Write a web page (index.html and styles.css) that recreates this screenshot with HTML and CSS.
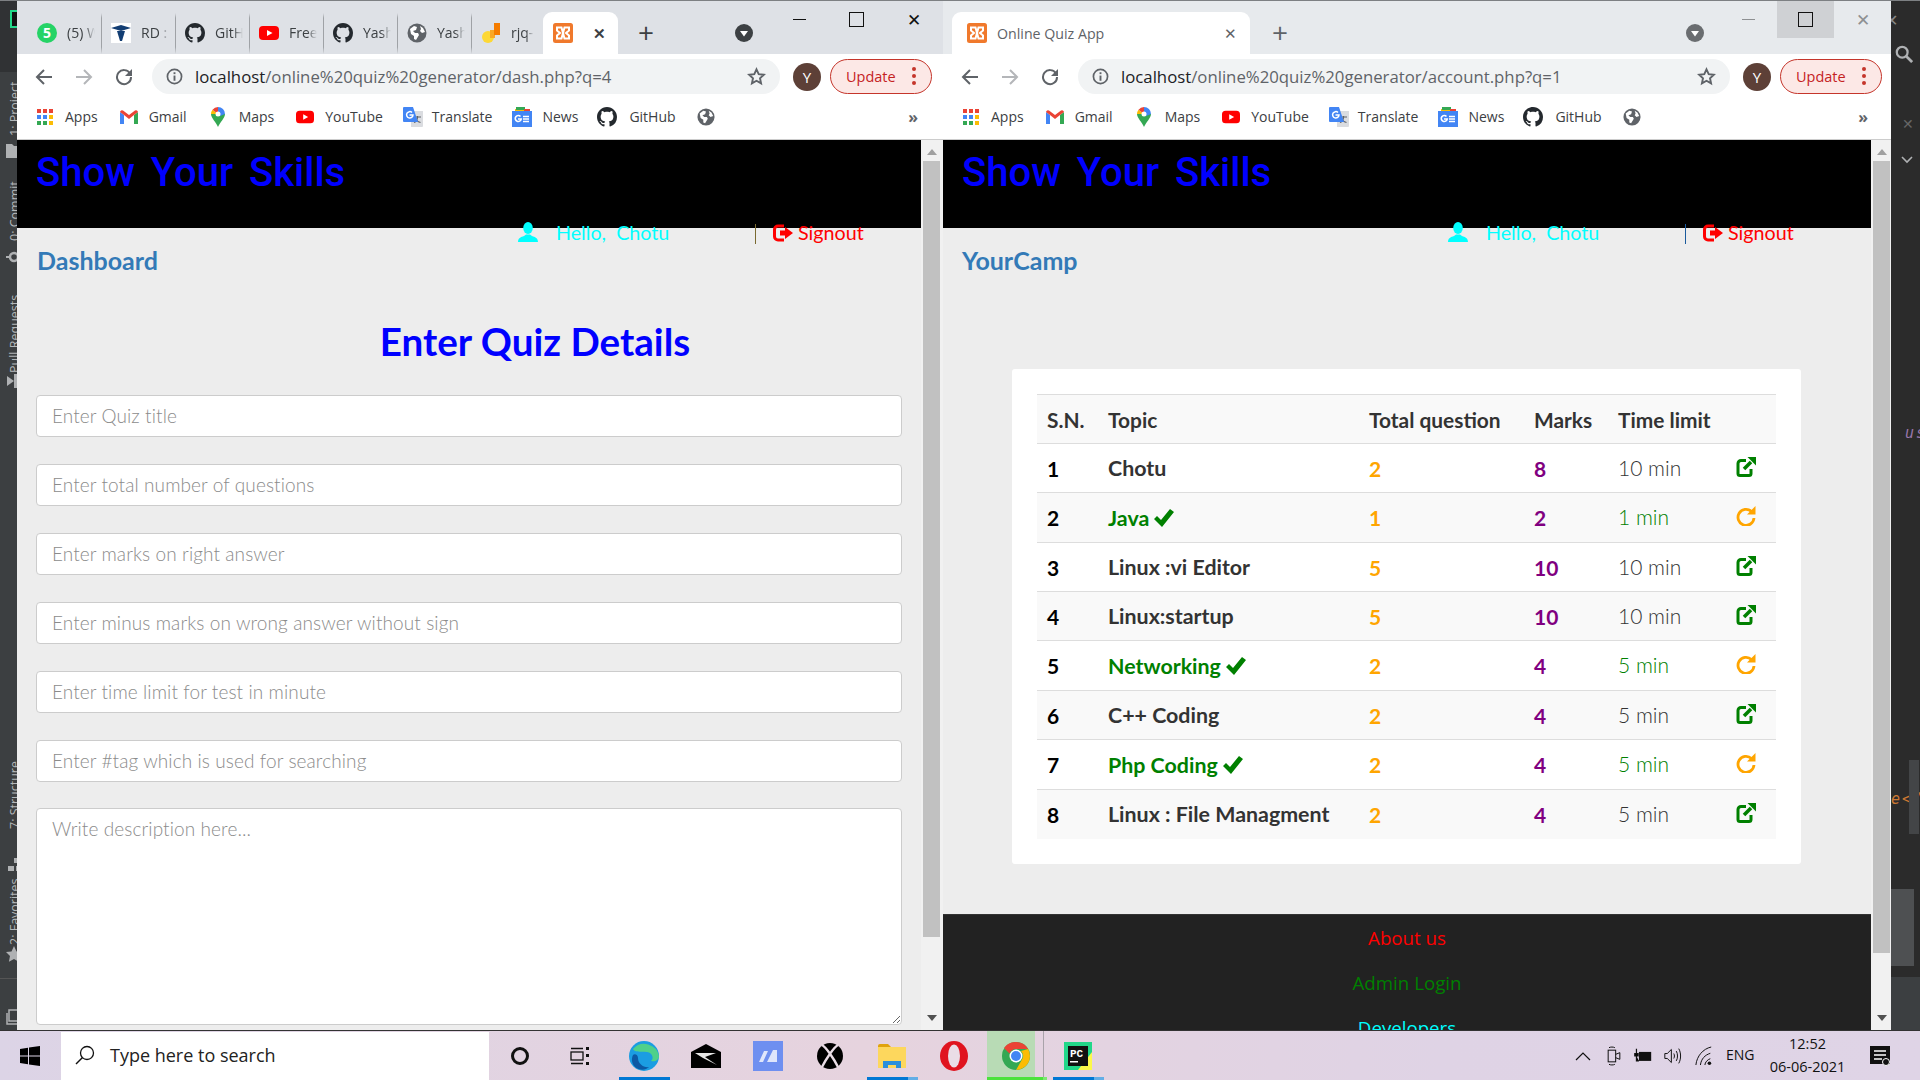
FILE: index.html
```html
<!DOCTYPE html>
<html><head><meta charset="utf-8">
<title>Online Quiz App</title>
<link rel="stylesheet" href="styles.css">
</head>
<body>

<svg class="defs" width="0" height="0">
	<symbol id="github" viewBox="0 0 16 16"><path fill="#24292e" d="M8 0C3.58 0 0 3.58 0 8c0 3.54 2.29 6.53 5.47 7.59.4.07.55-.17.55-.38 0-.19-.01-.82-.01-1.49-2.01.37-2.53-.49-2.69-.94-.09-.23-.48-.94-.82-1.13-.28-.15-.68-.52-.01-.53.63-.01 1.08.58 1.23.82.72 1.21 1.87.87 2.33.66.07-.52.28-.87.51-1.07-1.78-.2-3.64-.89-3.64-3.95 0-.87.31-1.59.82-2.15-.08-.2-.36-1.02.08-2.12 0 0 .67-.21 2.2.82.64-.18 1.32-.27 2-.27.68 0 1.36.09 2 .27 1.53-1.04 2.2-.82 2.2-.82.44 1.1.16 1.92.08 2.12.51.56.82 1.27.82 2.15 0 3.07-1.87 3.75-3.65 3.95.29.25.54.73.54 1.48 0 1.07-.01 1.93-.01 2.2 0 .21.15.46.55.38A8.013 8.013 0 0016 8c0-4.42-3.58-8-8-8z"/></symbol>
	<symbol id="youtube" viewBox="0 0 20 20"><rect y="3" width="20" height="14" rx="4" fill="#f00"/><path fill="#fff" d="M8 7l5.5 3L8 13z"/></symbol>
	<symbol id="globe" viewBox="0 0 20 20"><circle cx="10" cy="10" r="9.5" fill="#5f6368"/><path fill="#fff" d="M3 6l4-3 3 1-1 3-3 1 2 2 3 0 1 2-3 5-2-1 0-3-3-2zM13 3l3 2 2 4-3 1-2-2 1-2z"/></symbol>
	<symbol id="xampp" viewBox="0 0 20 20"><rect width="20" height="20" rx="2.5" fill="#f0792c"/><path fill="none" stroke="#fff" stroke-width="2" d="M4 4.5h4.5l3 11H16V12.5L13 10l3-2.500V4.500h-4.500l-3 11H4V12.500L7 10 4 7.500z"/></symbol>
	<symbol id="apps" viewBox="0 0 16 16"><g fill="#ea4335"><rect width="4" height="4"/><rect x="6" width="4" height="4"/><rect x="12" width="4" height="4"/></g><g fill="#4285f4"><rect y="6" width="4" height="4"/><rect x="6" y="6" width="4" height="4"/></g><rect x="12" y="6" width="4" height="4" fill="#fbbc05"/><g fill="#34a853"><rect y="12" width="4" height="4"/><rect x="6" y="12" width="4" height="4"/></g><rect x="12" y="12" width="4" height="4" fill="#fbbc05"/></symbol>
	<symbol id="gmail" viewBox="0 0 18 14"><path fill="#4285f4" d="M0 2v12h4V5z"/><path fill="#34a853" d="M14 5v9h4V2z"/><path fill="#ea4335" d="M0 2a2 2 0 0 1 3-1.500L9 5l6-4.500A2 2 0 0 1 18 2l-4 3-5 4-5-4z"/></symbol>
	<symbol id="maps" viewBox="0 0 14 20"><path fill="#34a853" d="M7 20C5 15 0 11 0 7h14c0 4-5 8-7 13z"/><path fill="#fbbc04" d="M0 7a7 7 0 0 1 1.500-4.300L7 7H0z"/><path fill="#4285f4" d="M7 0a7 7 0 0 1 7 7L9 9 7 7z"/><path fill="#ea4335" d="M1.500 2.700A7 7 0 0 1 7 0v7z"/><circle cx="7" cy="7" r="2.500" fill="#fff"/></symbol>
	<symbol id="translate" viewBox="0 0 20 20"><path fill="#dadce0" d="M8 4h12v15a1 1 0 0 1-1 1H8z"/><path fill="none" stroke="#5f6368" stroke-width="1.200" d="M11 10h7M14.500 9v1.500c0 2-2 4.500-3.500 5M12.500 11.500c1 2 3 3.500 5 4"/><path fill="#4285f4" d="M1 0h9l5 15H1a1 1 0 0 1-1-1V1a1 1 0 0 1 1-1z"/><path fill="none" stroke="#fff" stroke-width="1.500" d="M9 5.500A3.200 3.200 0 1 0 10 8H6.500"/></symbol>
	<symbol id="news" viewBox="0 0 20 20"><path fill="#fbbc04" d="M3 2h11v4H3z"/><path fill="#34a853" d="M4 0h9v3H4z"/><path fill="#ea4335" d="M12 2h6v4h-6z"/><rect y="4" width="20" height="16" fill="#4285f4"/><path fill="none" stroke="#fff" stroke-width="1.600" d="M8.500 9.500A3 3 0 1 0 9.200 12H6M11 9.500h6M11 12h6M11 14.500h6"/></symbol>
	<symbol id="star" viewBox="0 0 20 20"><path fill="none" stroke="#5f6368" stroke-width="2" d="M10 2.500l2.300 5 5.400.6-4 3.700 1.100 5.400L10 14.500l-4.800 2.700 1.100-5.400-4-3.700 5.400-.6z"/></symbol>
	<symbol id="back" viewBox="0 0 18 18"><path fill="none" stroke="currentColor" stroke-width="2" d="M17 9H2M9 2L2 9l7 7"/></symbol>
	<symbol id="reload" viewBox="0 0 18 18"><path fill="none" stroke="#5f6368" stroke-width="2" d="M15 5.500A7 7 0 1 0 16 9"/><path fill="#5f6368" d="M17 1v7h-7z"/></symbol>
	<symbol id="info" viewBox="0 0 18 18"><circle cx="9" cy="9" r="7.500" fill="none" stroke="#5f6368" stroke-width="1.800"/><rect x="8" y="8" width="2" height="5.500" fill="#5f6368"/><rect x="8" y="4.500" width="2" height="2" fill="#5f6368"/></symbol>
	<symbol id="tabmenu" viewBox="0 0 18 18"><circle cx="9" cy="9" r="9" fill="currentColor"/><path fill="#fff" d="M5 7h8l-4 5.500z"/></symbol>
	<symbol id="user" viewBox="0 0 20 20"><ellipse cx="10" cy="6" rx="4.800" ry="6"/><path d="M0 20c0-4 3-5 6-6l2-1.500h4l2 1.500c3 1 6 2 6 6z"/></symbol>
	<symbol id="signout" viewBox="0 0 20 18"><path fill="none" stroke="#f00" stroke-width="3" d="M11 2H5a3.500 3.500 0 0 0-3.500 3.500v7A3.500 3.500 0 0 0 5 16h6"/><path fill="#f00" d="M7 6.500h5V3l8 6-8 6v-3.500H7z"/></symbol>
	<symbol id="share" viewBox="0 0 20 20"><path fill="none" stroke="#008000" stroke-width="3" d="M10 3.500H5A3 3 0 0 0 2 6.500v10a2 2 0 0 0 2 2h9a2 2 0 0 0 2-2V12"/><path fill="none" stroke="#008000" stroke-width="3.500" d="M8 12l7-7"/><path fill="#008000" d="M11.500 0H20v8.500z"/></symbol>
	<symbol id="redo" viewBox="0 0 20 20"><path fill="none" stroke="#ffa500" stroke-width="2.800" d="M15.500 5.500A8 8 0 1 0 18 12"/><path fill="#ffa500" d="M19.500 0v8.500H11z"/></symbol>
	<symbol id="check" viewBox="0 0 20 18"><path fill="#008000" d="M0 10l3-3 4 4L16 0l4 3L8 18z"/></symbol>
</svg>

<div class="desktop">

	<div class="ide-left">
		<div class="ide-logo"></div>
		<div class="ide-label ide-project">1: Project</div>
		<svg class="ide-ic ide-ic-folder" viewBox="0 0 16 14"><path d="M0 0h6l2 2h8v12H0z"/></svg>
		<div class="ide-label ide-commit">0: Commit</div>
		<svg class="ide-ic ide-ic-git" viewBox="0 0 16 14"><circle cx="8" cy="7" r="4" fill="none" stroke="#afb1b3" stroke-width="2.500"/><path stroke="#afb1b3" stroke-width="2" d="M0 7h4M12 7h4"/></svg>
		<div class="ide-label ide-pull">Pull Requests</div>
		<svg class="ide-ic ide-ic-pull" viewBox="0 0 16 14"><rect x="8" width="3" height="14"/><path d="M0 7l7-5v10z" transform="rotate(180 4 7)"/></svg>
		<div class="ide-label ide-structure">7: Structure</div>
		<svg class="ide-ic ide-ic-struct" viewBox="0 0 16 14"><rect x="8" y="0" width="6" height="5"/><rect x="2" y="8" width="6" height="5"/><rect x="10" y="8" width="6" height="5"/></svg>
		<div class="ide-label ide-favorites">2: Favorites</div>
		<svg class="ide-ic ide-ic-star" viewBox="0 0 16 16"><path d="M8 0l2.500 5.500 5.500.6-4 3.900 1.100 5.800L8 13l-5.100 2.800L4 10 0 6.100l5.500-.6z"/></svg>
		<div class="ide-rule"></div>
		<svg class="ide-ic ide-ic-box" viewBox="0 0 16 16"><path fill="none" stroke="#afb1b3" stroke-width="1.500" d="M3 1h13v11H3zM1 4v11h12"/></svg>
	</div>

	<!-- left window -->
	<div class="win win-left">
		<div class="tabstrip">
			<div class="tab"><svg class="fav" viewBox="0 0 20 20"><circle cx="10" cy="10" r="10" fill="#25d366"/><text x="10" y="15" text-anchor="middle" class="fav-num">5</text></svg><span class="tab-name">(5) W</span></div>
			<div class="tab"><svg class="fav" viewBox="0 0 20 20"><rect width="20" height="20" fill="#fff"/><path fill="#123d73" d="M0 5l10-3 10 3-10 3z"/><path fill="#123d73" d="M6 8h8l-3 10H9z"/></svg><span class="tab-name">RD :</span></div>
			<div class="tab"><svg class="fav"><use href="#github"/></svg><span class="tab-name">GitH</span></div>
			<div class="tab"><svg class="fav"><use href="#youtube"/></svg><span class="tab-name">Free</span></div>
			<div class="tab"><svg class="fav"><use href="#github"/></svg><span class="tab-name">Yash</span></div>
			<div class="tab"><svg class="fav"><use href="#globe"/></svg><span class="tab-name">Yash</span></div>
			<div class="tab tab-last"><svg class="fav" viewBox="0 0 20 20"><circle cx="7" cy="14" r="6" fill="#fdd835"/><rect x="9" y="7" width="5" height="8" fill="#f9a825"/><rect x="13" y="0" width="6" height="12" fill="#f57c00"/></svg><span class="tab-name">rjq-</span></div>
			<div class="tab-active"><svg class="fav"><use href="#xampp"/></svg><span class="tab-x">✕</span></div>
			<span class="newtab">+</span>
			<svg class="tabmenu"><use href="#tabmenu"/></svg>
			<div class="winbtns">
				<span class="btn-min"></span>
				<span class="btn-max"></span>
				<span class="btn-close">✕</span>
			</div>
		</div>
		<div class="toolbar">
			<svg class="nav nav-back"><use href="#back"/></svg>
			<svg class="nav nav-fwd"><use href="#back"/></svg>
			<svg class="nav"><use href="#reload"/></svg>
			<div class="omni">
				<svg class="omni-info"><use href="#info"/></svg>
				<span class="url"><b>localhost</b>/online%20quiz%20generator/dash.php?q=4</span>
				<svg class="omni-star"><use href="#star"/></svg>
			</div>
			<span class="avatar">Y</span>
			<div class="update"><span>Update</span><span class="dots"><i></i><i></i><i></i></span></div>
		</div>
		<div class="bookmarks">
			<div class="bm bm-apps"><svg><use href="#apps"/></svg>Apps</div>
			<div class="bm bm-gmail"><svg><use href="#gmail"/></svg>Gmail</div>
			<div class="bm bm-maps"><svg><use href="#maps"/></svg>Maps</div>
			<div class="bm bm-yt"><svg><use href="#youtube"/></svg>YouTube</div>
			<div class="bm bm-tr"><svg><use href="#translate"/></svg>Translate</div>
			<div class="bm bm-news"><svg><use href="#news"/></svg>News</div>
			<div class="bm bm-gh"><svg><use href="#github"/></svg>GitHub</div>
			<div class="bm bm-globe"><svg><use href="#globe"/></svg></div>
			<span class="more">»</span>
		</div>
		<div class="viewport">
			<div class="page">
				<div class="site-head"><h1>Show Your Skills</h1></div>
				<div class="hello">
					<svg class="hello-user"><use href="#user"/></svg>
					<span class="hello-name">Hello,&nbsp; Chotu</span>
					<span class="hello-bar"></span>
					<svg class="hello-out"><use href="#signout"/></svg>
					<span class="hello-sign">Signout</span>
				</div>
				<div class="crumb">Dashboard</div>
				<h2 class="form-title">Enter Quiz Details</h2>
				<form class="quiz-form">
					<input placeholder="Enter Quiz title">
					<input placeholder="Enter total number of questions">
					<input placeholder="Enter marks on right answer">
					<input placeholder="Enter minus marks on wrong answer without sign">
					<input placeholder="Enter time limit for test in minute">
					<input placeholder="Enter #tag which is used for searching">
					<textarea placeholder="Write description here..."></textarea>
				</form>
			</div>
			<div class="scrollbar"><span class="arrow-up"></span><div class="thumb thumb-left"></div><span class="arrow-down"></span></div>
		</div>
	</div>

	<!-- right window -->
	<div class="win win-right">
		<div class="tabstrip">
			<div class="tab-active tab-wide"><svg class="fav"><use href="#xampp"/></svg><span class="tab-title">Online Quiz App</span><span class="tab-x">✕</span></div>
			<span class="newtab">+</span>
			<svg class="tabmenu"><use href="#tabmenu"/></svg>
			<div class="winbtns">
				<span class="btn-min"></span>
				<span class="btn-max"></span>
				<span class="btn-close">✕</span>
			</div>
		</div>
		<div class="toolbar">
			<svg class="nav nav-back"><use href="#back"/></svg>
			<svg class="nav nav-fwd"><use href="#back"/></svg>
			<svg class="nav"><use href="#reload"/></svg>
			<div class="omni">
				<svg class="omni-info"><use href="#info"/></svg>
				<span class="url"><b>localhost</b>/online%20quiz%20generator/account.php?q=1</span>
				<svg class="omni-star"><use href="#star"/></svg>
			</div>
			<span class="avatar">Y</span>
			<div class="update"><span>Update</span><span class="dots"><i></i><i></i><i></i></span></div>
		</div>
		<div class="bookmarks">
			<div class="bm bm-apps"><svg><use href="#apps"/></svg>Apps</div>
			<div class="bm bm-gmail"><svg><use href="#gmail"/></svg>Gmail</div>
			<div class="bm bm-maps"><svg><use href="#maps"/></svg>Maps</div>
			<div class="bm bm-yt"><svg><use href="#youtube"/></svg>YouTube</div>
			<div class="bm bm-tr"><svg><use href="#translate"/></svg>Translate</div>
			<div class="bm bm-news"><svg><use href="#news"/></svg>News</div>
			<div class="bm bm-gh"><svg><use href="#github"/></svg>GitHub</div>
			<div class="bm bm-globe"><svg><use href="#globe"/></svg></div>
			<span class="more">»</span>
		</div>
		<div class="viewport">
			<div class="page">
				<div class="site-head"><h1>Show Your Skills</h1></div>
				<div class="hello">
					<svg class="hello-user"><use href="#user"/></svg>
					<span class="hello-name">Hello,&nbsp; Chotu</span>
					<span class="hello-bar"></span>
					<svg class="hello-out"><use href="#signout"/></svg>
					<span class="hello-sign">Signout</span>
				</div>
				<div class="crumb">YourCamp</div>
				<div class="card">
					<table class="quiz-table">
						<tr><th class="c-sn">S.N.</th><th class="c-topic">Topic</th><th class="c-total">Total question</th><th class="c-marks">Marks</th><th class="c-time">Time limit</th><th class="c-act"></th></tr>
						<tr><td class="sn">1</td><td class="topic">Chotu</td><td class="total">2</td><td class="marks">8</td><td class="time">10 min</td><td class="action"><svg class="act"><use href="#share"/></svg></td></tr>
						<tr class="done"><td class="sn">2</td><td class="topic">Java <svg class="tick"><use href="#check"/></svg></td><td class="total">1</td><td class="marks">2</td><td class="time">1 min</td><td class="action"><svg class="act"><use href="#redo"/></svg></td></tr>
						<tr><td class="sn">3</td><td class="topic">Linux :vi Editor</td><td class="total">5</td><td class="marks">10</td><td class="time">10 min</td><td class="action"><svg class="act"><use href="#share"/></svg></td></tr>
						<tr><td class="sn">4</td><td class="topic">Linux:startup</td><td class="total">5</td><td class="marks">10</td><td class="time">10 min</td><td class="action"><svg class="act"><use href="#share"/></svg></td></tr>
						<tr class="done"><td class="sn">5</td><td class="topic">Networking <svg class="tick"><use href="#check"/></svg></td><td class="total">2</td><td class="marks">4</td><td class="time">5 min</td><td class="action"><svg class="act"><use href="#redo"/></svg></td></tr>
						<tr><td class="sn">6</td><td class="topic">C++ Coding</td><td class="total">2</td><td class="marks">4</td><td class="time">5 min</td><td class="action"><svg class="act"><use href="#share"/></svg></td></tr>
						<tr class="done"><td class="sn">7</td><td class="topic">Php Coding <svg class="tick"><use href="#check"/></svg></td><td class="total">2</td><td class="marks">4</td><td class="time">5 min</td><td class="action"><svg class="act"><use href="#redo"/></svg></td></tr>
						<tr><td class="sn">8</td><td class="topic">Linux : File Managment</td><td class="total">2</td><td class="marks">4</td><td class="time">5 min</td><td class="action"><svg class="act"><use href="#share"/></svg></td></tr>
					</table>
				</div>
				<div class="site-foot">
					<div class="foot-about">About us</div>
					<div class="foot-admin">Admin Login</div>
					<div class="foot-dev">Developers</div>
				</div>
			</div>
			<div class="scrollbar"><span class="arrow-up"></span><div class="thumb thumb-right"></div><span class="arrow-down"></span></div>
		</div>
	</div>

	<div class="ide-right">
		<span class="ide-close">✕</span>
		<svg class="ide-search" viewBox="0 0 20 20"><circle cx="8" cy="8" r="6" fill="none" stroke="#afb1b3" stroke-width="2.500"/><path stroke="#afb1b3" stroke-width="3" d="M12.500 12.500L19 19"/></svg>
		<span class="ide-x2">✕</span>
		<svg class="ide-chev" viewBox="0 0 12 8"><path fill="none" stroke="#afb1b3" stroke-width="1.600" d="M1 1l5 5 5-5"/></svg>
		<span class="ide-code ide-us">us</span>
		<span class="ide-code ide-tag">e&lt;/</span>
		<div class="ide-mark"></div>
		<div class="ide-thumb"></div>
		<div class="ide-status"></div>
	</div>
</div>

<div class="taskbar">
	<svg class="win-logo" viewBox="0 0 20 20"><path d="M0 3l8-1.200V9.500H0zM9 1.600L20 0v9.500H9zM0 10.500h8v7.700L0 17zM9 10.500h11V20L9 18.400z"/></svg>
	<div class="search"><svg viewBox="0 0 20 20"><circle cx="12" cy="8" r="6.500" fill="none" stroke="#111" stroke-width="1.300"/><path stroke="#111" stroke-width="1.500" d="M7.500 12.500L1 19"/></svg><span>Type here to search</span></div>
	<span class="cortana"></span>
	<svg class="taskview" viewBox="0 0 20 24"><g fill="none" stroke="#111" stroke-width="1.300"><rect x="1" y="8" width="12" height="8"/><path d="M1 4.500h12M1 19.500h12"/></g><g fill="#111"><rect x="16" y="3" width="3" height="3"/><rect x="16" y="10" width="3" height="3"/><rect x="16" y="18" width="3" height="3"/></g></svg>
	<div class="task task-edge task-run"><svg viewBox="0 0 30 30"><circle cx="15" cy="15" r="15" fill="#1b9de2"/><path fill="#4fd08a" d="M4 8A15 15 0 0 1 30 15c0 4-4 6-8 5 3-2 2-8-4-9C12 10 6 12 4 8z"/><path fill="#0c59a4" d="M9 17c0 6 6 10 11 9-3 3-9 4-14 0-3-3-4-8-2-12 2-2 5 0 5 3z"/></svg></div>
	<div class="task task-mail"><svg viewBox="0 0 30 24"><path d="M0 8L15 0l15 8v16H0z"/><path fill="#fff" d="M4 9h21L14 13l12 8-14-7z" opacity=".9"/></svg></div>
	<div class="task task-app"><svg viewBox="0 0 30 30"><rect width="30" height="30" fill="#6e8ff0"/><path fill="#dfe6fb" d="M6 21l5-11h4l-5 11zM14 21l6-12h4v12z"/></svg></div>
	<div class="task task-xbox"><svg viewBox="0 0 26 26"><circle cx="13" cy="13" r="13"/><path stroke="#eadde6" stroke-width="2.400" fill="none" d="M5 2c4 2 12 14 16 22M21 2C17 4 9 16 5 24"/></svg></div>
	<div class="task task-files task-run2"><svg viewBox="0 0 28 24"><path fill="#e0a30e" d="M0 2a2 2 0 0 1 2-2h8l3 3H0z"/><path fill="#fdd75d" d="M0 3h28v21H0z"/><path fill="#2a8fdc" d="M5 17h18v7h-5v-3h-8v3H5z"/></svg></div>
	<div class="task task-opera"><svg viewBox="0 0 28 30"><ellipse cx="14" cy="15" rx="14" ry="15" fill="#e0141f"/><ellipse cx="14" cy="15" rx="6" ry="11.500" fill="#eadde6"/></svg></div>
	<div class="task task-chrome"><svg viewBox="0 0 28 28"><circle cx="14" cy="14" r="14" fill="#34a853"/><path fill="#ea4335" d="M14 0a14 14 0 0 1 12.100 7H14a7 7 0 0 0-6.500 4.500L2 6A14 14 0 0 1 14 0z"/><path fill="#fbbc04" d="M26.100 7A14 14 0 0 1 14 28l6-10.500A7 7 0 0 0 19 9z"/><circle cx="14" cy="14" r="6.500" fill="#fff"/><circle cx="14" cy="14" r="5" fill="#4285f4"/></svg></div>
	<div class="task task-pc task-run2"><svg viewBox="0 0 28 28"><rect width="28" height="28" fill="#21d789"/><path fill="#fcf84a" d="M14 28h14V10z"/><rect x="4" y="4" width="20" height="20" fill="#111"/><text x="6" y="15" class="pc-txt">PC</text><rect x="6" y="19" width="8" height="1.500" fill="#fff"/></svg></div>
	<div class="tray">
		<svg class="tray-caret" viewBox="0 0 16 10"><path fill="none" stroke="#111" stroke-width="1.200" d="M1 9l7-7 7 7"/></svg>
		<svg class="tray-ic tray-meet" viewBox="0 0 16 24"><g fill="none" stroke="#111" stroke-width="1.200"><rect x="1" y="5" width="9" height="14"/><path d="M10 10l5-2v8l-5-2M2 2c2-1 5-1 7 0M2 22c2 1 5 1 7 0"/></g></svg>
		<svg class="tray-ic tray-batt" viewBox="0 0 22 18"><rect x="6" y="4" width="15" height="11" fill="#111"/><path stroke="#111" stroke-width="1.500" d="M3 0v6M1 6h4v3H1zM3 9v6h3"/></svg>
		<svg class="tray-ic tray-vol" viewBox="0 0 22 22"><g fill="none" stroke="#111" stroke-width="1.200"><path d="M1 8h3l5-5v16l-5-5H1zM12 8c1 2 1 4 0 6M15 5c2 3 2 9 0 12M18 2c3 5 3 13 0 18"/></g></svg>
		<svg class="tray-ic tray-wifi" viewBox="0 0 20 22"><g fill="none" stroke="#111" stroke-width="1.100"><path d="M1 21C2 11 9 3 18 1M6 21c1-7 5-11 11-13M11 21c0-3 3-6 6-7"/></g><circle cx="16" cy="19" r="2" fill="#111"/></svg>
		<span class="tray-lang">ENG</span>
		<div class="clock"><div>12:52</div><div>06-06-2021</div></div>
		<svg class="notif" viewBox="0 0 20 20"><path d="M0 0h20v18H6l-3 0H0z"/><path stroke="#fff" stroke-width="1.300" d="M4 5h12M4 9h12M4 13h8"/><circle cx="16" cy="16" r="3.500" fill="#111" stroke="#fff"/></svg>
	</div>
</div>

</body>
</html>
```

FILE: styles.css
```css
* {
	box-sizing: border-box;
}
html, body {
	margin: 0;
	height: 100%;
	overflow: hidden;
}
body {
	display: flex;
	flex-direction: column;
	width: 1920px;
	height: 1080px;
	background: #2b2b2b;
	font-family: "Open Sans", "Noto Sans", sans-serif;
}
.defs {
	position: absolute;
}
.desktop {
	display: flex;
	height: 1030px;
	border-top: 1px solid #7d8083;
	flex: none;
}

/* ide pieces at both sides */
.ide-left {
	position: relative;
	width: 17px;
	flex: none;
	background: linear-gradient(#303234 71px, #3c3f41 71px);
	overflow: hidden;
	color: #b4b7b9;
	font-size: 12.500px;
}
.ide-logo {
	position: absolute;
	left: 10px;
	top: 9px;
	width: 14px;
	height: 18px;
	background: #111;
	border: 2px solid #21d789;
}
.ide-label {
	position: absolute;
	left: 6px;
	white-space: nowrap;
	transform-origin: left top;
	transform: rotate(-90deg);
}
.ide-project { top: 135px; }
.ide-commit { top: 240px; }
.ide-pull { top: 372px; }
.ide-structure { top: 828px; }
.ide-favorites { top: 944px; }
.ide-ic {
	position: absolute;
	left: 6px;
	width: 16px;
	height: 14px;
	fill: #afb1b3;
}
.ide-ic-folder { top: 143px; }
.ide-ic-git { top: 249px; }
.ide-ic-pull { top: 373px; }
.ide-ic-struct { top: 857px; }
.ide-ic-star { top: 945px; height: 16px; }
.ide-ic-box { top: 1008px; height: 16px; }
.ide-rule {
	position: absolute;
	left: 0;
	right: 0;
	top: 977px;
	height: 1px;
	background: #555;
}

.ide-right {
	position: relative;
	flex: 1;
	background: #2b2b2b;
	overflow: hidden;
}
.ide-close {
	position: absolute;
	left: -6px;
	top: 8px;
	color: #888;
	font-size: 16px;
}
.ide-search {
	position: absolute;
	left: 4px;
	top: 44px;
	width: 18px;
	height: 18px;
}
.ide-x2 {
	position: absolute;
	left: 11px;
	top: 113px;
	color: #666;
	font-size: 14px;
}
.ide-chev {
	position: absolute;
	left: 10px;
	top: 155px;
	width: 12px;
	height: 8px;
}
.ide-code {
	position: absolute;
	font: italic 15px "DejaVu Sans Mono", monospace;
	letter-spacing: 2px;
}
.ide-us {
	left: 14px;
	top: 423px;
	color: #9876aa;
}
.ide-tag {
	left: 0;
	top: 789px;
	color: #cc7832;
}
.ide-mark {
	position: absolute;
	left: 18px;
	top: 759px;
	width: 10px;
	height: 74px;
	background: #434547;
}
.ide-thumb {
	position: absolute;
	left: 0;
	top: 888px;
	width: 23px;
	height: 77px;
	background: #4e5052;
}
.ide-status {
	position: absolute;
	left: 0;
	right: 0;
	top: 976px;
	bottom: 0;
	background: #3c3f41;
}

/* chrome window */
.win {
	display: flex;
	flex-direction: column;
	flex: none;
	background: #fff;
	overflow: hidden;
}
.win-left {
	width: 926px;
}
.win-right {
	width: 948px;
}
.tabstrip {
	display: flex;
	align-items: flex-end;
	height: 53px;
	padding-left: 11px;
	background: #dee1e6;
	color: #3c4043;
	flex: none;
}
.win-right .tabstrip {
	background: #e7eaed;
}
.tab {
	display: flex;
	align-items: center;
	width: 74px;
	height: 41px;
	padding-left: 9px;
	border-right: 1px solid #9fa2a6;
	border-top: 5px solid #dee1e6;
	border-bottom: 7px solid #dee1e6;
	font-size: 14px;
}
.tab-last {
	width: 62px;
	border-right: 0;
	padding-left: 9px;
}
.fav {
	width: 20px;
	height: 20px;
	flex: none;
}
.fav-num {
	font: bold 14px "Open Sans", sans-serif;
	fill: #fff;
}
.tab-name {
	display: block;
	width: 28px;
	margin-left: 10px;
	overflow: hidden;
	white-space: nowrap;
	-webkit-mask-image: linear-gradient(to right, #000 65%, transparent);
	mask-image: linear-gradient(to right, #000 65%, transparent);
}
.tab-last .tab-name {
	width: 24px;
	margin-left: 10px;
}
.tab-active {
	display: flex;
	align-items: center;
	width: 75px;
	height: 42px;
	padding: 0 0 0 10px;
	border-radius: 9px 9px 0 0;
	background: #fff;
	margin-left: 9px;
}
.tab-wide {
	width: 298px;
	margin-left: -2px;
	padding: 0 13px 0 15px;
}
.tab-x {
	margin-left: auto;
	margin-right: 12px;
	font-size: 15px;
	font-weight: 700;
	color: #3c4043;
}
.tab-wide .tab-x {
	margin-right: 0;
	font-weight: 400;
	color: #5f6368;
}
.tab-title {
	margin-left: 10px;
	font-size: 14.200px;
	color: #5f6368;
}
.newtab {
	margin-left: 18px;
	width: 20px;
	height: 40px;
	font-size: 28px;
	line-height: 36px;
	text-align: center;
	color: #3c4043;
}
.win-right .newtab {
	margin-left: 20px;
	color: #5f6368;
}
.tabmenu {
	width: 18px;
	height: 18px;
	margin-left: 79px;
	margin-bottom: 12px;
	color: #3c4043;
}
.win-right .tabmenu {
	margin-left: 396px;
	color: #6a6d70;
}
.winbtns {
	display: flex;
	margin-left: auto;
	margin-right: 1px;
	align-self: flex-start;
	height: 37px;
}
.win-right .winbtns {
	margin-right: 0;
}
.winbtns span {
	display: flex;
	align-items: center;
	justify-content: center;
	width: 57px;
	height: 37px;
}
.btn-min::before {
	content: "";
	width: 13px;
	height: 1px;
	background: #111;
}
.btn-max::before {
	content: "";
	width: 13px;
	height: 13px;
	border: 1px solid #111;
}
.btn-close {
	font-size: 17px;
	color: #111;
}
.win-right .btn-min::before {
	background: #8e9092;
}
.win-right .btn-max {
	background: #cfd1d4;
}
.win-right .btn-close {
	color: #8e9092;
}
.toolbar {
	display: flex;
	align-items: center;
	height: 45px;
	padding: 0 11px 0 18px;
	flex: none;
}
.win-right .toolbar {
	padding-right: 9px;
}
.nav {
	width: 18px;
	height: 18px;
	margin-right: 22px;
	flex: none;
}
.nav-back {
	color: #5f6368;
}
.nav-fwd {
	color: #b4b6b9;
	transform: scaleX(-1);
}
.omni {
	display: flex;
	align-items: center;
	flex: 1;
	height: 35px;
	margin-left: -3px;
	padding: 0 14px 0 14px;
	border-radius: 18px;
	background: #f1f3f4;
}
.omni-info {
	width: 17px;
	height: 17px;
	flex: none;
}
.url {
	margin-left: 12px;
	font-size: 16.750px;
	color: #5f6368;
	white-space: nowrap;
}
.url b {
	font-weight: 400;
	color: #202124;
}
.omni-star {
	width: 19px;
	height: 19px;
	margin-left: auto;
}
.avatar {
	display: flex;
	align-items: center;
	justify-content: center;
	width: 28px;
	height: 28px;
	margin: 0 9px 0 13px;
	border-radius: 50%;
	background: #5d4037;
	color: #fff;
	font-size: 15px;
	flex: none;
}
.update {
	display: flex;
	align-items: center;
	width: 102px;
	height: 35px;
	padding: 0 0 1px 15px;
	border: 1.5px solid #c5352b;
	border-radius: 18px;
	background: #fce8e6;
	color: #c5221f;
	font-size: 14.500px;
	flex: none;
}
.dots {
	display: flex;
	flex-direction: column;
	gap: 3px;
	margin-left: auto;
	margin-right: 15px;
}
.dots i {
	width: 4px;
	height: 4px;
	border-radius: 50%;
	background: #c5352b;
}
.bookmarks {
	display: flex;
	align-items: center;
	height: 41px;
	padding: 0 0 5px 20px;
	border-bottom: 1px solid #ccc;
	color: #3c4043;
	font-size: 14px;
	flex: none;
}
.bm {
	display: flex;
	align-items: center;
	white-space: nowrap;
}
.bm svg {
	width: 20px;
	height: 20px;
	margin-right: 10px;
}
.bm-apps svg { width: 16px; height: 16px; margin-right: 12px; }
.bm-gmail { margin-left: 22px; }
.bm-gmail svg { width: 18px; height: 14px; margin-right: 11px; }
.bm-maps { margin-left: 24px; }
.bm-maps svg { width: 14px; height: 20px; margin-right: 14px; }
.bm-yt { margin-left: 22px; }
.bm-yt svg { width: 18px; height: 18px; margin-right: 11px; }
.bm-tr { margin-left: 20px; }
.bm-tr svg { margin-right: 9px; }
.bm-news { margin-left: 20px; }
.bm-gh { margin-left: 19px; }
.bm-gh svg { margin-right: 12px; }
.bm-globe { margin-left: 21px; }
.bm-globe svg { width: 18px; height: 18px; }
.more {
	margin-left: auto;
	margin-right: 25px;
	font-size: 16px;
	font-weight: 700;
	color: #5f6368;
}
.win-right .more {
	margin-right: 23px;
}

/* page */
.viewport {
	display: flex;
	flex: 1;
	min-height: 0;
}
.page {
	flex: 1;
	min-width: 0;
	overflow: hidden;
	background: #ededed;
	font-family: Lato, "Open Sans", sans-serif;
}
.scrollbar {
	display: flex;
	flex-direction: column;
	align-items: center;
	width: 22px;
	background: #f1f1f1;
	padding: 0 3px 0 2px;
	flex: none;
}
.win-right .scrollbar {
	width: 20px;
	padding: 0 1px 0 2px;
}
.thumb {
	width: 100%;
	background: #c1c1c1;
}
.thumb-left {
	height: 776px;
}
.thumb-right {
	height: 792px;
}
.arrow-up, .arrow-down {
	display: block;
	width: 0;
	height: 0;
	border-left: 5px solid transparent;
	border-right: 5px solid transparent;
}
.arrow-up {
	margin: 9px 0 6px;
	border-bottom: 6px solid #a0a0a0;
}
.arrow-down {
	margin-top: auto;
	margin-bottom: 9px;
	border-top: 6px solid #505050;
}
.site-head {
	height: 88px;
	padding: 11px 0 0 19px;
	background: #000;
}
.site-head h1 {
	margin: 0;
	font: 500 40px/44px Roboto, sans-serif;
	color: #00f;
	word-spacing: 6px;
}
.hello {
	display: flex;
	align-items: center;
	height: 24px;
	margin-top: -6px;
	padding-left: 501px;
	font-size: 19.700px;
	position: relative;
	line-height: 22px;
}
.win-right .hello {
	padding-left: 505px;
}
.hello-user {
	width: 20px;
	height: 20px;
	fill: #0ff;
	margin-top: -4px;
}
.hello-name {
	margin-left: 18px;
	margin-bottom: 3px;
	width: 199px;
	color: #0ff;
	white-space: nowrap;
}
.hello-bar {
	width: 1px;
	height: 20px;
	background: #7a6a30;
}
.win-right .hello-bar {
	background: #1a5a9c;
}
.hello-out {
	width: 20px;
	height: 18px;
	margin-left: 17px;
	margin-top: -3px;
}
.hello-sign {
	margin-left: 5px;
	margin-bottom: 3px;
	color: #f00;
}
.crumb {
	height: 30px;
	padding-left: 20px;
	color: #337ab7;
	font-size: 25px;
	line-height: 28px;
	font-weight: 700;
}
.win-right .crumb {
	padding-left: 19px;
}
.form-title {
	margin: 43px 0 0 0;
	height: 44px;
	padding-left: 132px;
	text-align: center;
	font-size: 38.600px;
	line-height: 44px;
	font-weight: 700;
	color: #00f;
}
.quiz-form {
	display: flex;
	flex-direction: column;
	gap: 27px;
	margin: 32px 19px 0 19px;
}
.quiz-form input, .quiz-form textarea {
	display: block;
	width: 100%;
	height: 42px;
	padding: 5px 15px 7px;
	border: 1px solid #ccc;
	border-radius: 4px;
	background: #fff;
	font: 300 19px Lato, sans-serif;
	letter-spacing: .1px;
	outline: 0;
}
.quiz-form textarea {
	height: 217px;
	margin-top: -1px;
	padding-top: 8px;
}
.quiz-form ::placeholder {
	color: #8b8b8b;
}
.card {
	width: 789px;
	margin: 93px 0 0 69px;
	padding: 25px;
	border-radius: 3px;
	background: #fff;
}
.quiz-table {
	width: 739px;
	border-collapse: collapse;
	table-layout: fixed;
	color: #333;
	font-size: 21px;
}
.quiz-table th, .quiz-table td {
	height: 49px;
	padding: 0 0 0 10px;
	border-top: 1px solid #ddd;
	text-align: left;
}
.quiz-table .done td {
	height: 50px;
}
.quiz-table th {
	font-size: 20.900px;
	font-weight: 700;
	background: #f9f9f9;
}
.quiz-table tr:nth-child(odd) td {
	background: #f9f9f9;
}
.c-sn { width: 61px; }
.c-topic { width: 261px; }
.c-total { width: 165px; }
.c-marks { width: 84px; }
.c-time { width: 119px; }
.c-act { width: 49px; }
.sn {
	font-weight: 700;
	color: #000;
}
.topic {
	font-size: 21.400px;
	font-weight: 700;
	white-space: nowrap;
}
.total {
	font-weight: 700;
	color: #ffa500;
}
.marks {
	font-weight: 700;
	color: #800080;
}
.quiz-table .time {
	font-weight: 300;
	padding-bottom: 2px;
}
.quiz-table .action {
	padding-left: 9px;
}
.done .topic, .done .time {
	color: #008000;
}
.act {
	display: block;
	width: 20px;
	height: 20px;
	margin-top: -3px;
}
.tick {
	display: inline-block;
	width: 20px;
	height: 18px;
	vertical-align: -1px;
}
.site-foot {
	margin-top: 50px;
	height: 200px;
	padding-top: 6px;
	background: #222;
	border-top: 1px solid #333;
	text-align: center;
	font-family: "Open Sans", sans-serif;
	font-size: 18.700px;
}
.site-foot div {
	height: 45px;
	line-height: 34px;
}
.foot-about { color: #f00; }
.foot-admin { color: #008000; }
.foot-dev { color: #0ff; }

/* taskbar */
.taskbar {
	display: flex;
	align-items: center;
	height: 50px;
	flex: none;
	background: linear-gradient(to right, #dcd4e6, #e6d3de 45%, #dfd3e5 75%, #dfd4e6);
	border-top: 1px solid #333;
}
.win-logo {
	width: 20px;
	height: 20px;
	margin-left: 20px;
	fill: #000;
}
.search {
	display: flex;
	align-items: center;
	width: 428px;
	height: 48px;
	margin-left: 21px;
	padding: 0 0 2px 14px;
	background: #fff;
	font-size: 18px;
	color: #222;
}
.search svg {
	width: 20px;
	height: 22px;
	margin-right: 15px;
}
.cortana {
	width: 18px;
	height: 18px;
	margin-left: 22px;
	border: 3px solid #111;
	border-radius: 50%;
}
.taskview {
	width: 20px;
	height: 24px;
	margin-left: 41px;
	flex: none;
}
.task {
	display: flex;
	align-items: center;
	justify-content: center;
	position: relative;
	width: 62px;
	height: 49px;
	flex: none;
}
.task svg {
	width: 30px;
	height: 30px;
}
.task-edge {
	margin-left: 23px;
}
.task-run::after, .task-run2::after {
	content: "";
	position: absolute;
	left: 6px;
	right: 5px;
	bottom: 0;
	height: 3px;
	background: #0078d4;
}
.task-run2::after {
	background: linear-gradient(to right, #0078d4 80%, #63aee6 80%);
}
.task-mail svg { height: 24px; }
.task-xbox svg { width: 26px; height: 26px; }
.task-files svg { width: 28px; height: 24px; }
.task-opera svg { width: 28px; height: 30px; }
.task-chrome {
	background: linear-gradient(to right, transparent 2px, #b8dbb5 2px, #b8dbb5 50px, transparent 50px, transparent 58px, #a9a3aa 58px, #a9a3aa 59px, transparent 59px);
}
.task-chrome::after {
	content: "";
	position: absolute;
	left: 2px;
	right: 0;
	bottom: 0;
	height: 3px;
	background: linear-gradient(to right, #4be23c 56px, #7ce872 56px);
}
.task-chrome svg { width: 28px; height: 28px; }
.task-pc svg { width: 28px; height: 28px; }
.pc-txt {
	font: bold 11px "Liberation Mono", monospace;
	fill: #fff;
}
.tray {
	display: flex;
	align-items: center;
	flex: 1;
	font-size: 14px;
	color: #111;
}
.tray-caret {
	width: 16px;
	height: 10px;
	margin-left: 466px;
}
.tray-ic {
	width: 18px;
	height: 20px;
}
.tray-meet { margin-left: 14px; }
.tray-batt { margin-left: 11px; }
.tray-vol { margin-left: 12px; }
.tray-wifi { margin-left: 13px; }
.tray-lang {
	margin-left: 13px;
	padding-bottom: 2px;
}
.clock {
	width: 80px;
	margin-left: 13px;
	padding-bottom: 2px;
	text-align: center;
	font-size: 14.500px;
	line-height: 23px;
}
.notif {
	width: 20px;
	height: 20px;
	margin-left: 22px;
	fill: #111;
}
```
